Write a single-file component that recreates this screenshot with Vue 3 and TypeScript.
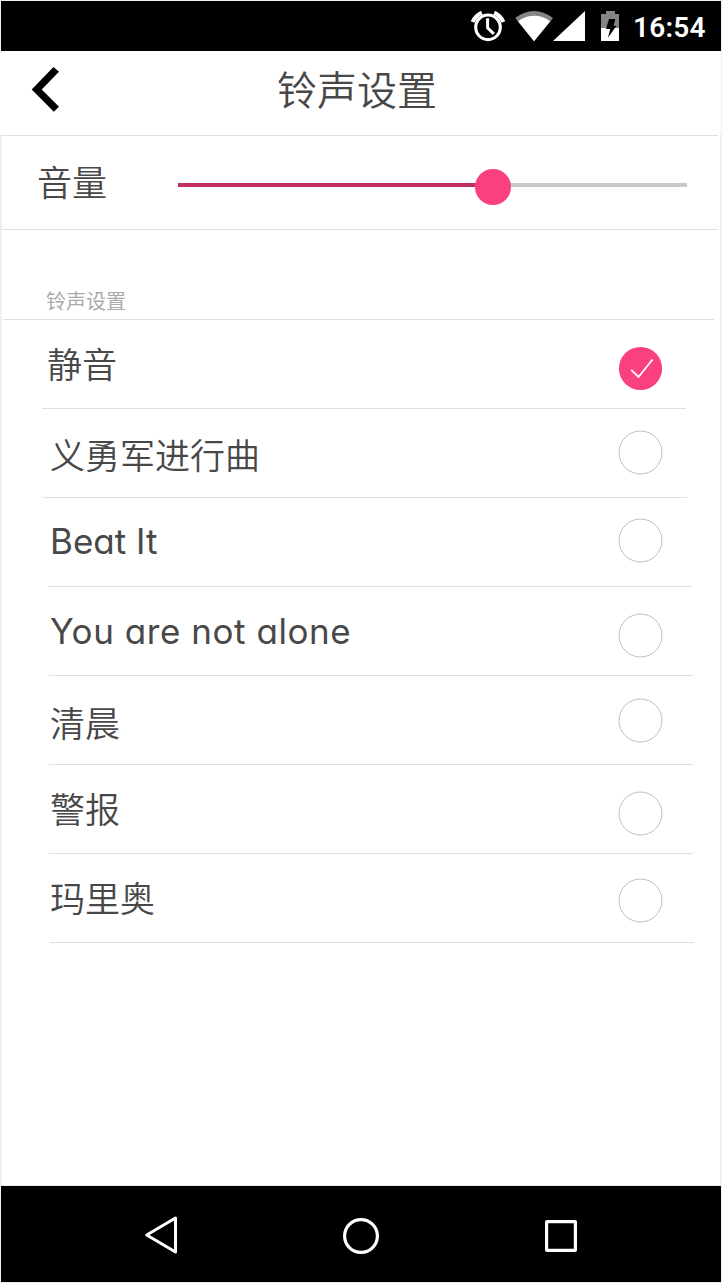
<script setup lang="ts">
import { ref } from 'vue'

interface Ringtone {
  name: string
  latin?: boolean
  tracking?: number
  inset: number
  textX: number
  textTop: number
  radioTop: number
}

const volume = ref(61.8)
const selected = ref(0)

const ringtones: Ringtone[] = [
  { name: '静音', inset: 42, textX: 47, textTop: 23, radioTop: 26 },
  { name: '义勇军进行曲', inset: 43, textX: 50, textTop: 25, radioTop: 21 },
  { name: 'Beat It', latin: true, tracking: 0, inset: 48, textX: 50, textTop: 23, radioTop: 20 },
  { name: 'You are not alone', latin: true, tracking: 0.55, inset: 49, textX: 50, textTop: 24, radioTop: 26 },
  { name: '清晨', inset: 49, textX: 50, textTop: 26, radioTop: 22 },
  { name: '警报', inset: 49, textX: 50, textTop: 23, radioTop: 26 },
  { name: '玛里奥', inset: 50, textX: 50, textTop: 23, radioTop: 24 },
]
</script>

<template>
  <div class="phone">
    <div class="status">
      <svg class="alarm" width="36" height="34" viewBox="470 9 36 34">
        <circle cx="488" cy="27.3" r="12.3" fill="none" stroke="#fff" stroke-width="3.1" />
        <path d="M487.6 18.3V27.8L493.8 33.8" fill="none" stroke="#fff" stroke-width="3" />
        <path d="M472.6 22Q475.4 15.6 481.8 12.6M494.2 12.6Q500.6 15.6 503.4 22" fill="none" stroke="#fff" stroke-width="4" />
      </svg>
      <svg class="wifi" width="38" height="34" viewBox="515 9 38 34">
        <path d="M515.2 18Q534 4 553 18L534 41.3Z" fill="#858585" />
        <path d="M518 21.2Q534 10.3 550.3 21.2L534 41.3Z" fill="#fff" />
      </svg>
      <svg class="signal" width="32" height="34" viewBox="553 9 32 34">
        <path d="M553 41H585V11Z" fill="#fff" />
      </svg>
      <svg class="battery" width="18" height="34" viewBox="601 9 18 34">
        <path d="M601 14H606V11H615V14H619V28H601Z" fill="#858585" />
        <path d="M601 28H619V41H601Z" fill="#fff" />
        <path d="M609 19H615.3L613.6 25.7H616.5L608 37.8L610.2 29H606Z" fill="#000" />
      </svg>
      <span class="time">16:54</span>
    </div>

    <header class="header">
      <svg class="back" width="30" height="47" viewBox="31 66 30 47">
        <path d="M31.7 89.5L53.5 67L59 71.8L41.7 89.5L59 106.8L53.8 111.7Z" fill="#000" />
      </svg>
      <h1 class="title">铃声设置</h1>
    </header>

    <main class="body">
      <section class="volume">
        <span class="volume-label">音量</span>
        <div class="slider">
          <div class="fill" :style="{ width: volume + '%' }"></div>
          <div class="thumb" :style="{ left: volume + '%' }"></div>
        </div>
      </section>

      <h2 class="section-title">铃声设置</h2>

      <ul class="list">
        <li
          v-for="(tone, i) in ringtones"
          :key="tone.name"
          class="row"
          :style="{ marginLeft: tone.inset - 2 + 'px', paddingRight: tone.inset - 19 + 'px' }"
          @click="selected = i"
        >
          <span
            class="name"
            :class="{ latin: tone.latin }"
            :style="{
              marginLeft: tone.textX - tone.inset + 'px',
              marginTop: tone.textTop + 'px',
              letterSpacing: (tone.tracking ?? 0) + 'px',
            }"
          >{{ tone.name }}</span>
          <svg class="radio" width="45" height="45" viewBox="0 0 45 45" :style="{ marginTop: tone.radioTop + 'px' }">
            <template v-if="selected === i">
              <circle cx="22.5" cy="22.5" r="21.6" fill="#fb407f" />
              <path d="M13.2 23.8L20.5 31L34.5 13.5" fill="none" stroke="#fff" stroke-width="1.8" />
            </template>
            <circle v-else cx="22.5" cy="22.5" r="21.5" fill="#fff" stroke="#bfbfbf" stroke-width="1" />
          </svg>
        </li>
      </ul>
    </main>

    <nav class="nav">
      <svg class="nav-back" width="36" height="42" viewBox="143 1214 36 42">
        <path d="M146.7 1235L175.5 1218V1252Z" fill="none" stroke="#fff" stroke-width="3" stroke-linejoin="round" />
      </svg>
      <svg class="nav-home" width="36" height="36" viewBox="0 0 36 36">
        <circle cx="18" cy="18" r="16.4" fill="none" stroke="#fff" stroke-width="3.2" />
      </svg>
      <svg class="nav-recent" width="32" height="32" viewBox="0 0 32 32">
        <rect x="1.6" y="1.6" width="28.8" height="28.8" rx=".4" fill="none" stroke="#fff" stroke-width="3.2" />
      </svg>
    </nav>
  </div>
</template>

<style>
body {
  margin: 0;
  background: #fff;
}
</style>

<style scoped>
.phone {
  box-sizing: border-box;
  width: 722px;
  height: 1283px;
  display: flex;
  flex-direction: column;
  background: #efefef;
  padding: 1px 0;
  color: #484848;
  font-family: "Liberation Sans", "Noto Sans CJK SC", sans-serif;
  overflow: hidden;
}
.status {
  height: 50px;
  margin: 0 1px;
  box-sizing: border-box;
  background: #000;
  display: flex;
  align-items: flex-start;
  padding: 8px 0 0 469px;
}
.status svg {
  flex: none;
}
.wifi {
  margin-left: 9px;
}
.battery {
  margin-left: 16px;
}
.time {
  margin-left: 14px;
  margin-top: 2px;
  font: 600 28px/34px Roboto, sans-serif;
  letter-spacing: .2px;
  color: #fff;
}
.header {
  height: 83px;
  flex: none;
  margin-right: 1px;
  background: #fff;
  display: grid;
  grid-template-columns: 31px 30px 1fr 61px;
  align-items: start;
}
.back {
  grid-column: 2;
  margin-top: 15px;
}
.title {
  grid-column: 3;
  margin: 12px 0 0 -7px;
  text-align: center;
  font-size: 40px;
  line-height: 50px;
  font-weight: 350;
  font-family: "Noto Sans CJK SC", sans-serif;
}
.body {
  flex: 1;
  margin: 0 2px;
  padding-top: 1px;
  background: #fff;
}
.volume {
  box-sizing: border-box;
  width: 716px;
  height: 95px;
  border-top: 1px solid #e0e0e0;
  border-bottom: 1px solid #e0e0e0;
  display: flex;
  align-items: flex-start;
}
.volume-label {
  width: 141px;
  margin: 25px 0 0 35px;
  font: 350 35px/40px "Noto Sans CJK SC", sans-serif;
}
.slider {
  position: relative;
  width: 508.5px;
  height: 4px;
  margin: 47px 0 0 .4px;
  background: #c8c8c8;
}
.fill {
  height: 4px;
  background: #c42f63;
}
.thumb {
  position: absolute;
  top: -14px;
  width: 36px;
  height: 36px;
  margin-left: -18px;
  border-radius: 50%;
  background: #fb407f;
}
.section-title {
  box-sizing: border-box;
  width: 711px;
  height: 90px;
  margin: 0 0 0 1px;
  padding: 56px 0 0 43px;
  border-bottom: 1px solid #e0e0e0;
  font: 400 20px/30px "Noto Sans CJK SC", sans-serif;
  color: #aaa;
}
.list {
  list-style: none;
  margin: 0;
  padding: 0;
}
.row {
  box-sizing: border-box;
  width: 644px;
  height: 89px;
  border-bottom: 1px solid #e0e0e0;
  display: flex;
  align-items: flex-start;
}
.name {
  font: 350 35px/40px "Noto Sans CJK SC", sans-serif;
  white-space: nowrap;
}
.latin {
  font-family: Inter, Lato, sans-serif;
  font-weight: 400;
  font-feature-settings: "cv11" 1;
}
.radio {
  margin-left: auto;
  flex: none;
}
.nav {
  height: 96px;
  flex: none;
  box-sizing: border-box;
  margin: 1px 1px 0;
  background: #000;
  display: flex;
  align-items: center;
  padding: 4px 0 0 142px;
}
.nav-back {
  margin-bottom: 2px;
}
.nav-home {
  margin-left: 164px;
}
.nav-recent {
  margin-left: 166px;
}
</style>
